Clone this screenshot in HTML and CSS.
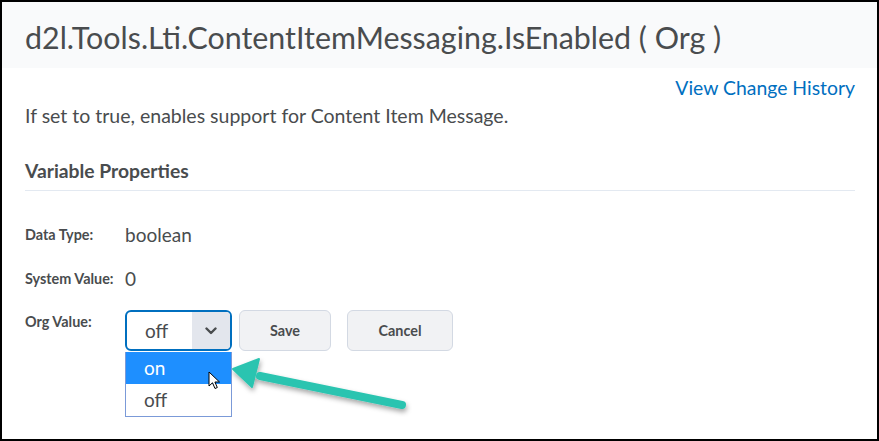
FILE: index.html
```html
<!DOCTYPE html>
<html lang="en">
<head>
  <meta charset="UTF-8">
  <meta name="viewport" content="width=device-width, initial-scale=1.0">
  <title>Config Variable</title>
  <link rel="stylesheet" href="styles.css">
</head>
<body>

<div class="frame">
  <!-- Title band -->
  <div class="header">
    <h1>d2l.Tools.Lti.ContentItemMessaging.IsEnabled ( Org )</h1>
  </div>

  <div class="content">
    <div class="history"><a href="#">View Change History</a></div>
    <p class="description">If set to true, enables support for Content Item Message.</p>

    <h2>Variable Properties</h2>

    <div class="prop first">
      <span class="label">Data Type:</span>
      <span class="value">boolean</span>
    </div>
    <div class="prop">
      <span class="label">System Value:</span>
      <span class="value">0</span>
    </div>

    <!-- Org value editor -->
    <div class="prop org">
      <span class="label">Org Value:</span>
      <div class="select-wrap">
        <div class="select">
          <span class="select-text">off</span>
          <span class="select-btn">
            <svg width="12" height="8" viewBox="0 0 12 8"><path d="M1.5 1.5 L6 6 L10.5 1.5" fill="none" stroke="#494c4e" stroke-width="2.4" stroke-linecap="round" stroke-linejoin="round"/></svg>
          </span>
        </div>
        <ul class="options">
          <li class="active">on</li>
          <li>off</li>
        </ul>
      </div>
      <button class="btn save">Save</button>
      <button class="btn">Cancel</button>
    </div>
  </div>

  <!-- mouse pointer -->
  <svg class="cursor" width="14" height="20" viewBox="0 0 14 20">
    <path d="M1 1 L1 15 L4.5 11.8 L7 17.5 L9.3 16.5 L6.9 11 L11.5 11 Z" fill="#fff" stroke="#000" stroke-width="1" stroke-linejoin="round"/>
  </svg>

  <!-- callout arrow -->
  <svg class="arrow" width="200" height="70" viewBox="0 0 200 70">
    <defs>
      <filter id="sh" x="-20%" y="-40%" width="140%" height="180%">
        <feDropShadow dx="1" dy="3" stdDeviation="2.5" flood-color="#000" flood-opacity="0.35"/>
      </filter>
    </defs>
    <g filter="url(#sh)" fill="#2bc4b0" stroke="#2bc4b0">
      <line x1="172" y1="57" x2="30" y2="28" stroke-width="8" stroke-linecap="round"/>
      <polygon points="3,21 29,11 22,39" stroke-width="2" stroke-linejoin="round"/>
    </g>
  </svg>
</div>

</body>
</html>
```

FILE: styles.css
```css
body {
  margin: 0;
  font-family: Lato, "Open Sans", sans-serif;
  color: #494c4e;
}
.frame {
  position: relative;
  width: 879px;
  height: 441px;
  box-sizing: border-box;
  border: 2px solid #000;
  background: #fff;
  overflow: hidden;
}
.header {
  height: 66px;
  display: flex;
  align-items: center;
  padding-left: 23px;
  padding-top: 3px;
  box-sizing: border-box;
  background: #f9fafb;
}
h1 {
  margin: 0;
  font-size: 30.4px;
  font-weight: 400;
  line-height: 36px;
  color: #494c4e;
}
.content {
  padding: 0 22px 0 23px;
}
.history {
  margin-top: 8px;
  text-align: right;
  line-height: 24px;
  font-size: 19.4px;
}
.history a {
  color: #006fbf;
  text-decoration: none;
}
.description {
  margin: 4px 0 0;
  font-size: 19.5px;
  line-height: 24px;
}
h2 {
  margin: 31px 0 0;
  padding-bottom: 7px;
  border-bottom: 1px solid #e3e9f1;
  font-size: 19.3px;
  font-weight: 700;
  line-height: 24px;
}
.prop {
  display: flex;
  align-items: center;
  height: 24px;
  margin-top: 20px;
}
.prop.first {
  margin-top: 31px;
}
.label {
  width: 100px;
  flex-shrink: 0;
  font-size: 14.4px;
  font-weight: 700;
}
.value {
  font-size: 19px;
}
.org {
  align-items: flex-start;
  height: auto;
}
.org .label {
  margin-top: 3px;
}
.select-wrap {
  width: 107px;
}
.select {
  display: flex;
  height: 41px;
  box-sizing: border-box;
  border: 2px solid #006fbf;
  border-radius: 6px;
  overflow: hidden;
}
.select-text {
  flex: 1;
  padding-left: 18px;
  font-size: 19px;
  line-height: 37px;
}
.select-btn {
  width: 38px;
  display: flex;
  align-items: center;
  justify-content: center;
  background: #e3e6ed;
}
.options {
  list-style: none;
  margin: 1px 0 0;
  padding: 0;
  border: 1px solid #7b9ad8;
  border-top: none;
}
.options li {
  height: 32px;
  line-height: 32px;
  padding-left: 18px;
  font-size: 19px;
}
.options li.active {
  background: #1e8fff;
  color: #fff;
}
.btn {
  height: 41px;
  margin-left: 7px;
  padding: 0 28px;
  border: 1px solid #d3d9e3;
  border-radius: 6px;
  background: #f1f2f4;
  font-family: Lato, "Open Sans", sans-serif;
  font-size: 14.4px;
  font-weight: 700;
  color: #494c4e;
}
.btn.save {
  width: 92px;
}
.btn + .btn {
  margin-left: 16px;
  width: 106px;
}
.cursor {
  position: absolute;
  left: 206px;
  top: 369px;
}
.arrow {
  position: absolute;
  left: 228px;
  top: 346px;
}
```
